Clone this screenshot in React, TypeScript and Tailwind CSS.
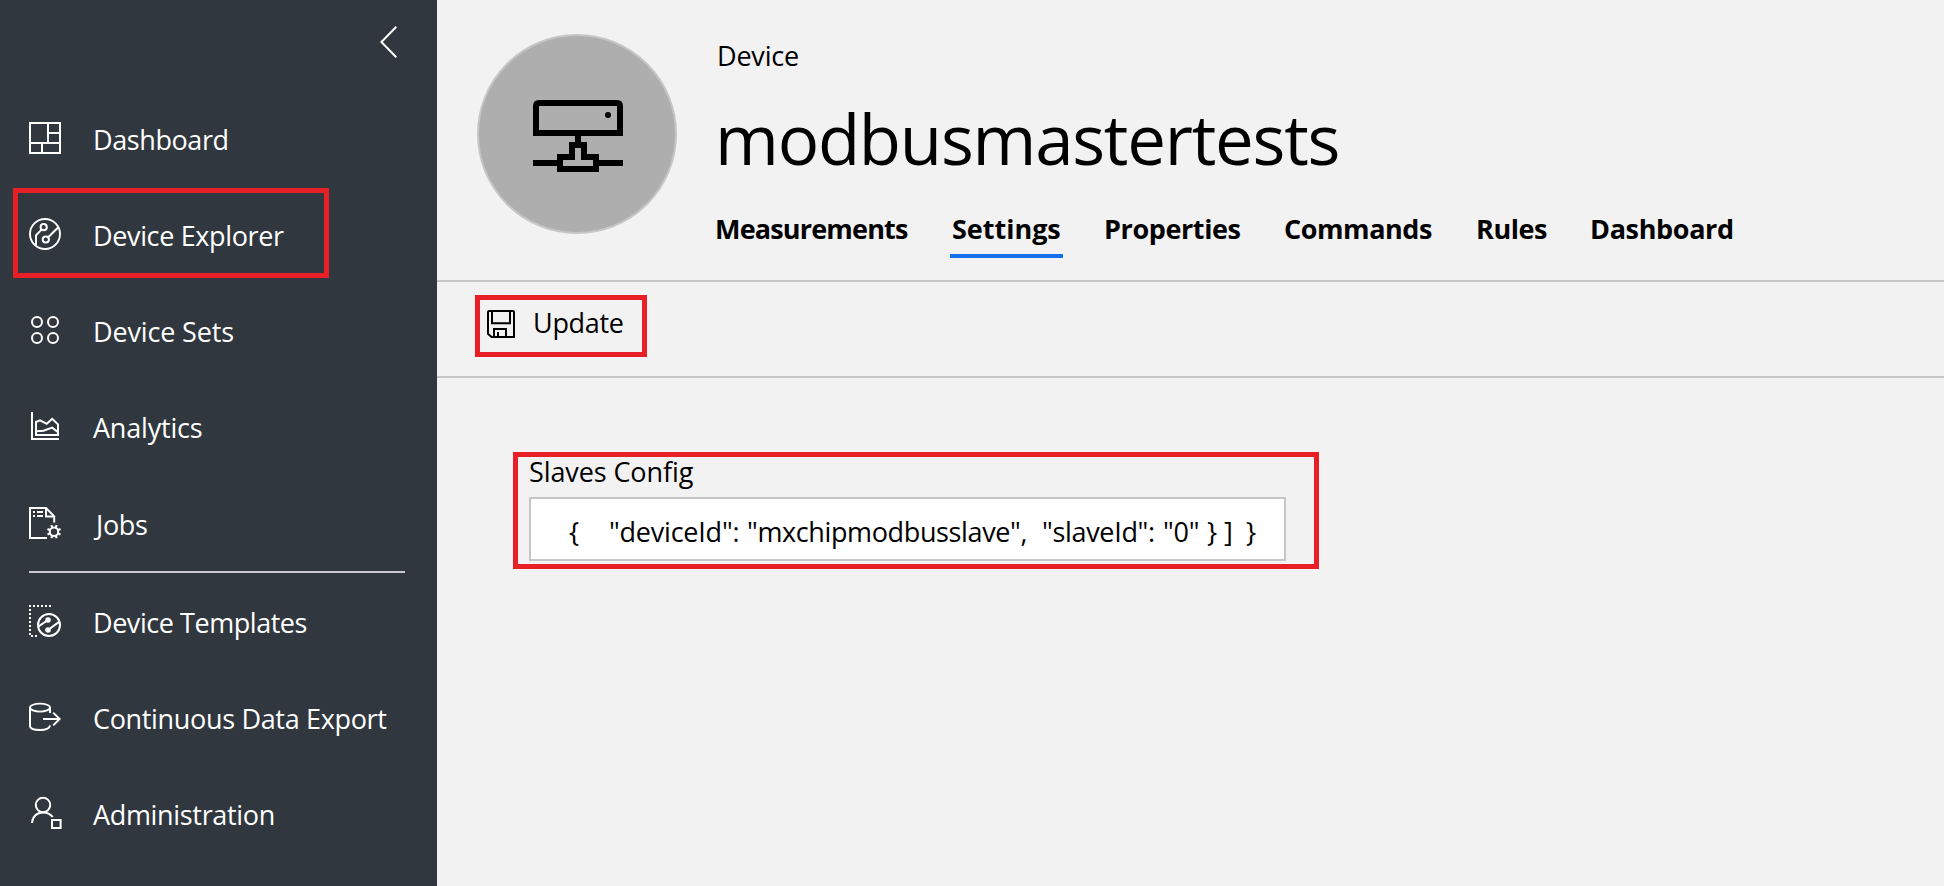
import type { ReactNode } from "react";

function NavIcon({ children }: { children: ReactNode }) {
  return (
    <svg width="32" height="32" viewBox="0 0 32 32" fill="none" stroke="white" strokeWidth="2" className="shrink-0 overflow-visible">
      {children}
    </svg>
  );
}

const dashboardIcon = (
  <NavIcon>
    <path d="M1 1H31V31H1Z M19 1V21 M1 21H31 M19 11H31 M13 21V31" />
  </NavIcon>
);

const explorerIcon = (
  <NavIcon>
    <circle cx="16" cy="16" r="15" strokeWidth="1.9" />
    <circle cx="14.7" cy="9.2" r="3.1" />
    <circle cx="16.8" cy="21.5" r="3.1" />
    <path d="M12.5 11.6L7 17.4V27.5 M19.2 19.3L29.6 9" />
  </NavIcon>
);

const setsIcon = (
  <NavIcon>
    <circle cx="8" cy="8" r="5" />
    <circle cx="24" cy="8" r="5" />
    <circle cx="8" cy="24" r="5" />
    <circle cx="24" cy="24" r="5" />
  </NavIcon>
);

const analyticsIcon = (
  <NavIcon>
    <path d="M3 2V29H30" />
    <path d="M7 25V12L11 10.4L17.8 13.8L23.2 8.8L29 14.4V25Z" />
    <path d="M7 21.2L14.5 20.8L23.2 17.6L29 22.2" />
  </NavIcon>
);

const jobsIcon = (
  <NavIcon>
    <path d="M18 31H1V1H17L25.2 9.4V15.5 M17 1V9.4H25" />
    <path d="M4 5H6 M8 5H14 M4 9H6 M8 9H14" />
    <circle cx="25" cy="24.7" r="4.2" />
    <path
      strokeWidth="2.2"
      d="M26.8 20.4L27.7 18.2 M23.2 20.4L22.3 18.2 M26.8 29L27.7 31.2 M23.2 29L22.3 31.2 M29.3 22.9L31.5 22 M29.3 26.5L31.5 27.4 M20.7 22.9L18.5 22 M20.7 26.5L18.5 27.4"
    />
  </NavIcon>
);

const templatesIcon = (
  <NavIcon>
    <path strokeDasharray="2 2" d="M0 1H24 M1 4V32 M2 31H8" />
    <circle cx="20" cy="20" r="11" />
    <circle cx="19" cy="15" r="2.8" fill="white" stroke="none" />
    <circle cx="19" cy="25" r="2.8" fill="white" stroke="none" />
    <path d="M19 15L9.6 21.4 M19 25L30.4 16.6" />
  </NavIcon>
);

const exportIcon = (
  <NavIcon>
    <ellipse cx="11" cy="6.6" rx="10" ry="4" strokeWidth="1.8" />
    <path d="M1 6.6V25C1 27.6 5.5 29 11 29C17 29 20.6 27.4 21 24.4 M21 6.6V12" />
    <path d="M14 18H30.4 M24.2 11.6L30.6 18L24.2 24.4" />
  </NavIcon>
);

const adminIcon = (
  <NavIcon>
    <circle cx="14" cy="8" r="7.2" />
    <path d="M3 26C3.4 19.4 8 15.4 14 15.4C18 15.4 21.4 17 23.8 20" />
    <path d="M23 23H31.6V31H23Z" />
  </NavIcon>
);

function NavItem({ icon, label, text }: { icon: ReactNode; label: string; text: string }) {
  return (
    <a className="flex h-24 items-center pl-[29px] text-[27px] leading-9 whitespace-nowrap text-white">
      {icon}
      <span className={`pt-1 ${text}`}>{label}</span>
    </a>
  );
}

function Sidebar() {
  return (
    <nav className="flex w-[437px] shrink-0 flex-col bg-[#31373e]">
      <div className="flex h-[90px] justify-end pt-[26px] pr-[40px]">
        <svg width="17" height="32" viewBox="0 0 17 32" fill="none" stroke="white" strokeWidth="2">
          <path d="M16.3 .7L1.4 16L16.3 31.3" />
        </svg>
      </div>
      <NavItem icon={dashboardIcon} label="Dashboard" text="pl-[32px] tracking-[-0.41px]" />
      <NavItem icon={explorerIcon} label="Device Explorer" text="pl-[32px] tracking-[-0.36px]" />
      <NavItem icon={setsIcon} label="Device Sets" text="pl-[32px] tracking-[-0.15px]" />
      <NavItem icon={analyticsIcon} label="Analytics" text="pl-[32px] tracking-[-0.2px]" />
      <div className="pt-px">
        <NavItem icon={jobsIcon} label="Jobs" text="pl-[35px] tracking-[-0.34px]" />
      </div>
      <div className="mr-8 ml-[29px] h-[2px] bg-[#c8c8d0]" />
      <NavItem icon={templatesIcon} label="Device Templates" text="pl-[32px] tracking-[-0.45px]" />
      <NavItem icon={exportIcon} label="Continuous Data Export" text="pl-[32px] tracking-[-0.33px]" />
      <NavItem icon={adminIcon} label="Administration" text="pl-[32px] tracking-[-0.33px]" />
    </nav>
  );
}

function Avatar() {
  return (
    <div className="flex size-[200px] shrink-0 justify-center rounded-full border-2 border-[#c6c6c6] bg-[#aeaeae] pt-16 pl-[2px]">
      <svg width="90" height="72" viewBox="0 0 90 72" fill="none" stroke="black" strokeWidth="6">
        <path d="M3 33V6Q3 3 6 3H84Q87 3 87 6V33Z" />
        <circle cx="75" cy="15" r="3" fill="black" stroke="none" />
        <path d="M45 36V42 M0 63H24 M66 63H90" />
        <path d="M39 45H51V57H63V69H27V57H39Z" />
      </svg>
    </div>
  );
}

function Header() {
  return (
    <header className="flex h-[282px] border-b-2 border-[#c6c6c6] pt-[34px] pl-10">
      <Avatar />
      <div className="flex flex-col pl-[38px]">
        <div className="mt-[3px] ml-[2px] text-[27px] leading-[37px] tracking-[-0.2px]">Device</div>
        <h1 className="mt-[17px] text-[69px] leading-[94px] tracking-[-1.25px]">modbusmastertests</h1>
        <div className="mt-[23px] flex text-[27px] leading-[41px] font-bold whitespace-nowrap">
          <a className="w-[235px] tracking-[-0.82px]">Measurements</a>
          <a className="h-[50px] w-[113px] border-b-4 border-[#1570f0] pl-[2px] tracking-[-0.02px]">Settings</a>
          <a className="w-[180px] pl-[41px] tracking-[-0.4px]">Properties</a>
          <a className="w-[192px] pl-[41px] tracking-[-0.44px]">Commands</a>
          <a className="w-[115px] pl-[41px] tracking-[-0.44px]">Rules</a>
          <a className="pl-[40px] tracking-[-0.35px]">Dashboard</a>
        </div>
      </div>
    </header>
  );
}

function Toolbar() {
  return (
    <div className="flex h-24 items-start border-b-2 border-[#c6c6c6] pl-[38px]">
      <button className="mt-[13px] flex h-[62px] w-[172px] border-[5px] border-[#e81f26] pt-[10px] pl-[7px]">
        <svg width="28" height="28" viewBox="0 0 28 28" fill="none" stroke="black" strokeWidth="2">
          <path d="M1 2Q1 1 2 1H26Q27 1 27 2V27H4.5L1 23.8Z" />
          <path d="M5 1V13.2H23V1 M7 27V19H19V27 M11 22V27" />
        </svg>
        <span className="-mt-[5px] pl-[18px] text-[27px] leading-9 tracking-[-0.3px]">Update</span>
      </button>
    </div>
  );
}

function ConfigField() {
  return (
    <div className="mt-[74px] ml-[76px] h-[117px] w-[806px] border-[5px] border-[#e81f26] pl-[11px]">
      <div className="h-10 text-[27px] leading-[30px] tracking-[-0.1px]">Slaves Config</div>
      <div className="flex h-16 w-[757px] border-2 border-[#c6c6c6] bg-white pt-[15px] pl-[38px] text-[27px] leading-9 whitespace-nowrap">
        <span className="w-[40px]">{"{"}</span>
        <span className="w-[138px] tracking-[-0.22px]">"deviceId":</span>
        <span className="w-[295px] tracking-[-0.37px]">"mxchipmodbusslave",</span>
        <span className="w-[121px] tracking-[-0.32px]">"slaveId":</span>
        <span className="w-[44px] tracking-[-0.2px]">"0"</span>
        <span className="w-[17px]">{"}"}</span>
        <span className="w-[22px]">]</span>
        <span>{"}"}</span>
      </div>
    </div>
  );
}

export default function App() {
  return (
    <div className="relative flex h-[886px] w-[1944px] overflow-hidden bg-[#f2f2f2] font-['Open_Sans','Noto_Sans',sans-serif] text-black">
      <Sidebar />
      <main className="flex min-w-0 flex-1 flex-col">
        <Header />
        <Toolbar />
        <ConfigField />
      </main>
      <div className="pointer-events-none absolute top-[188px] left-[13px] h-[90px] w-[316px] border-[5px] border-[#e81f26]" />
    </div>
  );
}
